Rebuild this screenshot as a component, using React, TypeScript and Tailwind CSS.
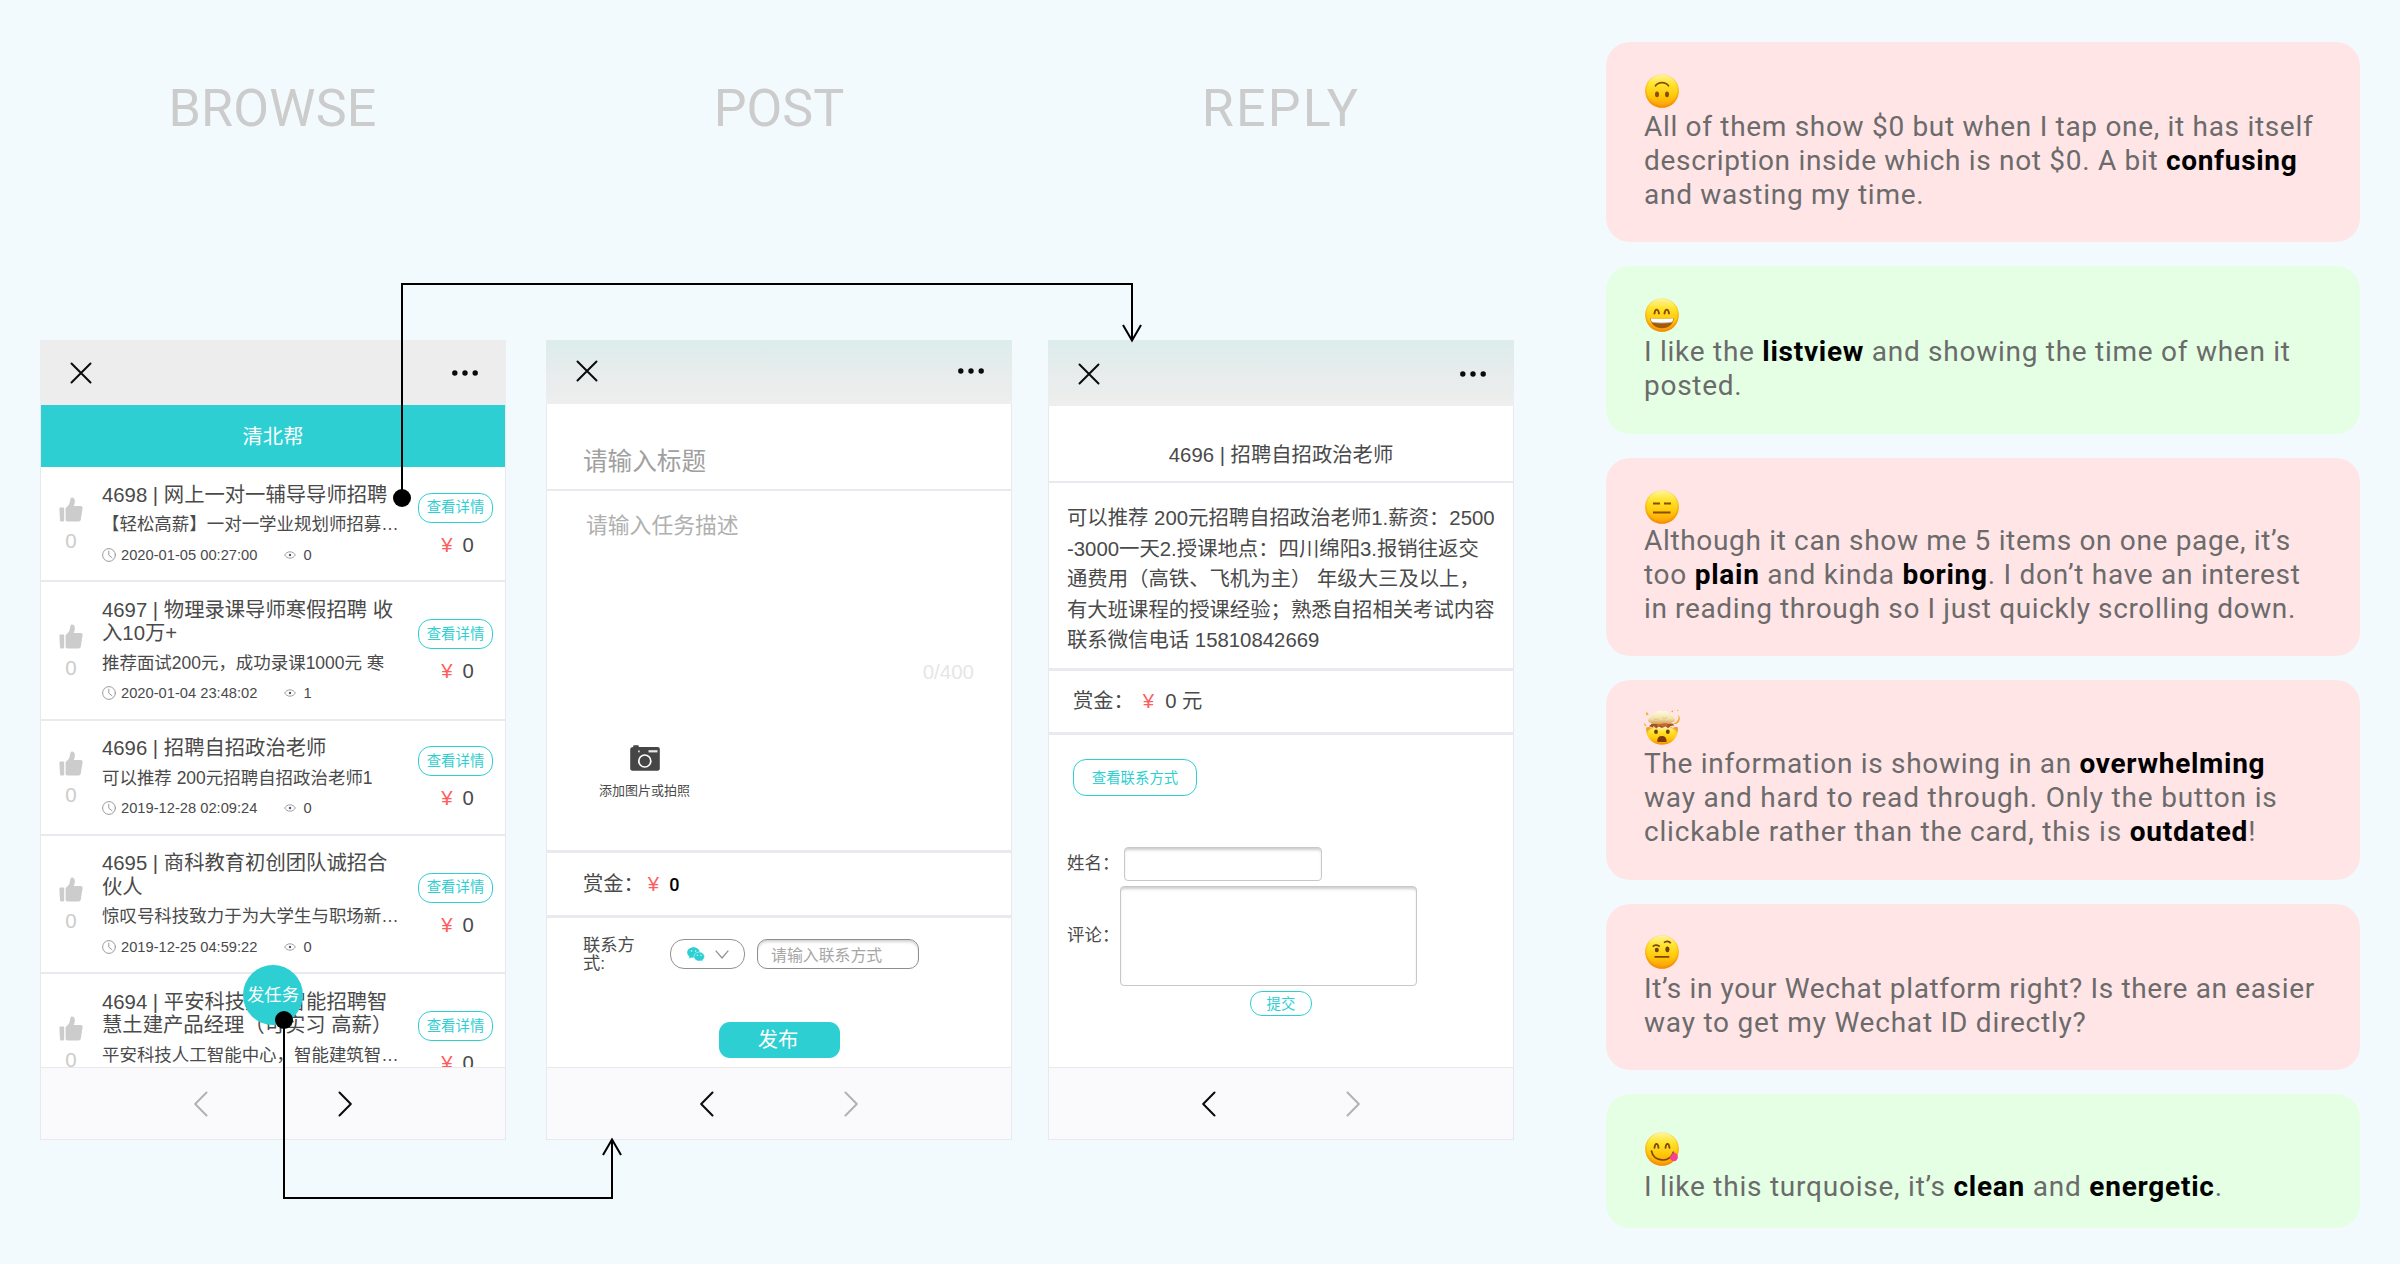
import type { ReactNode } from "react";

const UI_FONT = "font-['Liberation_Sans','Noto_Sans_CJK_SC',sans-serif]";

/* ---------- icons ---------- */

function CloseIcon() {
  return (
    <svg width="22" height="22" viewBox="0 0 22 22" fill="none" stroke="#0b0b0b" strokeWidth="2" strokeLinecap="round">
      <path d="M1.5 1.5 20.5 20.5M20.5 1.5 1.5 20.5" />
    </svg>
  );
}

function MoreIcon() {
  return (
    <svg width="26" height="6" viewBox="0 0 26 6" fill="#0b0b0b">
      <circle cx="2.8" cy="3" r="2.7" />
      <circle cx="13" cy="3" r="2.7" />
      <circle cx="23.2" cy="3" r="2.7" />
    </svg>
  );
}

function ChevronIcon({ dir, active }: { dir: "left" | "right"; active: boolean }) {
  return (
    <svg width="14" height="26" viewBox="0 0 14 26" fill="none" stroke={active ? "#0b0b0b" : "#b2b2b4"} strokeWidth="2" strokeLinecap="round" strokeLinejoin="round">
      <path d={dir === "left" ? "M12.5 1.5 1.2 13l11.3 11.5" : "M1.5 1.5 12.8 13 1.5 24.5"} />
    </svg>
  );
}

function ThumbIcon() {
  return (
    <svg width="24" height="25" viewBox="0 0 24 25" fill="#cccccc">
      <path d="M.4 11.4a.8.8 0 0 1 .8-.8h3.200a.8.8 0 0 1 .8.8v12.200a.8.8 0 0 1-.8.8H1.900a.9.9 0 0 1-.9-.8z" />
      <path d="M6.600 11c1.600-.9 3.400-2.900 4-4.900.4-1.500.5-3.100.9-4.400C11.800.8 12.600.4 13.500.6c1.500.3 2.500 1.900 2.400 3.800-.1 1.700-.6 3.200-1.200 4.700h7c1.300 0 2.100.9 1.900 2.100l-1.800 11.300c-.2 1.200-1 1.900-2.200 1.900H8.400c-1 0-1.800-.7-1.800-1.700z" />
    </svg>
  );
}

function ClockIcon() {
  return (
    <svg width="14" height="14" viewBox="0 0 14 14" fill="none" stroke="#8f8f8f" strokeWidth="0.9" strokeLinecap="round">
      <circle cx="7" cy="7" r="6.4" />
      <path d="M6.800 3.200v4l3.200 2.500" />
    </svg>
  );
}

function EyeIcon() {
  return (
    <svg width="12" height="8" viewBox="0 0 12 8" fill="none" stroke="#858585" strokeWidth="0.8">
      <path d="M.6 4C1.800 2.100 3.700.8 6 .8S10.200 2.100 11.400 4C10.200 5.900 8.300 7.200 6 7.200S1.800 5.900.6 4z" />
      <circle cx="6" cy="4" r="1.200" fill="#555" stroke="none" />
    </svg>
  );
}

function CameraIcon() {
  return (
    <svg width="30" height="26" viewBox="0 0 30 26">
      <path d="M3.200 2V1.200C3.200.5 3.700.2 4.300.2h3.500c.7 0 1 .4 1 1V2H27.500C29 2 29.800 2.900 29.800 4.200v19.300c0 1.300-.9 2.200-2.200 2.200H2.400C1.100 25.700.2 24.800.2 23.500V4.500C.2 3 1.300 2 3.200 2z" fill="#464646" />
      <circle cx="14.800" cy="16" r="6" fill="none" stroke="#fff" strokeWidth="1.700" />
      <rect x="18.500" y="5.200" width="9" height="2.200" fill="#e9e9e9" />
      <rect x="8" y="5.500" width="1.800" height="1.800" fill="#cfcfcf" />
    </svg>
  );
}

function WechatIcon() {
  return (
    <svg width="18" height="15" viewBox="0 0 18 15">
      <path d="M6.500.3C3 .3.2 2.700.2 5.600c0 1.700.9 3.100 2.300 4.100l-.6 2 2.300-1.200c.8.200 1.500.3 2.300.3 3.500 0 6.300-2.300 6.300-5.200S10 .3 6.500.3z" fill="#2dcfd3" />
      <path d="M12.200 5.100c-3 0-5.300 2-5.300 4.500s2.300 4.500 5.300 4.500c.7 0 1.300-.1 1.900-.3l1.900 1-.5-1.700c1.200-.8 2-2.100 2-3.500 0-2.500-2.400-4.500-5.300-4.500z" fill="#2dcfd3" stroke="#fff" strokeWidth=".5" />
      <g fill="#d8fbfb">
        <circle cx="4.500" cy="4" r=".8" />
        <circle cx="8.600" cy="4" r=".8" />
        <circle cx="10.400" cy="8.300" r=".7" />
        <circle cx="14" cy="8.300" r=".7" />
      </g>
    </svg>
  );
}

/* ---------- emoji ---------- */

type Mood = "upside" | "grin" | "blank" | "mind" | "brow" | "yum";

function EmojiDefs() {
  return (
    <svg width="0" height="0" className="absolute">
      <defs>
        <linearGradient id="face" x1="0" y1="0" x2="0" y2="1">
          <stop offset="0" stopColor="#fff5a0" />
          <stop offset="0.3" stopColor="#ffe42e" />
          <stop offset="0.65" stopColor="#ffc80a" />
          <stop offset="1" stopColor="#fb9a08" />
        </linearGradient>
        <radialGradient id="rim" cx="0.5" cy="0.46" r="0.54">
          <stop offset="0.8" stopColor="#f58a00" stopOpacity="0" />
          <stop offset="1" stopColor="#ee7f06" stopOpacity="0.75" />
        </radialGradient>
        <linearGradient id="cloud" x1="0" y1="0" x2="0" y2="1">
          <stop offset="0" stopColor="#fffbe2" />
          <stop offset="0.6" stopColor="#f2dfa6" />
          <stop offset="1" stopColor="#d49a52" />
        </linearGradient>
      </defs>
    </svg>
  );
}

function Emoji({ mood }: { mood: Mood }) {
  if (mood === "mind") {
    return (
      <svg width="36" height="36" viewBox="0 0 36 36" className="block">
        <path d="M2.200 18.500c2-.9 3.500-.8 5.200.6l2-1.500 2.600 2 2.400-1.500 3.600 1.500 3.500-1.600 2.600 1.700 2.800-2 2 1.200c1.400-1 3.200-1.200 5-.4.3 10.100-5.900 17-15.900 17S1.700 28.600 2.200 18.500z" fill="url(#face)" />
        <path d="M2.200 18.500c2-.9 3.500-.8 5.200.6l2-1.500 2.600 2 2.400-1.500 3.600 1.500 3.500-1.600 2.600 1.700 2.800-2 2 1.200c1.400-1 3.200-1.200 5-.4.3 10.100-5.900 17-15.900 17S1.700 28.600 2.200 18.500z" fill="url(#rim)" />
        <path d="M5 17.200l3.500 1.200 1-1.500 2.800 2.600 2.200-1.900 3.500 1.500 3.600-1.800 2.400 1.900 2.900-2.300 3.600-.6-2.300-1.700H8z" fill="#a3541f" />
        <path d="M14 13h9l1 4.500-2.500-1-2.500 1.200-2.600-1.200-3.400 1z" fill="#c46a37" />
        <path d="M6.500 13.800C3.600 13.500 3 9.600 6 8.700 5.800 6 8.500 4.300 10.600 5.200 11.500 2 16 .9 18.200 2.700c2.600-1.700 6.300-.4 6.800 2.300 3-.6 5 1.200 4.500 3.600 2.500 1.200 1.700 4.600-1 4.700-3.500 1.900-7 .5-9.500 1.300-3.500 1-9 .9-12.500-.8z" fill="url(#cloud)" />
        <path d="M10 9.500c1.500 1.300 3.200 1.200 4.500-.2M18 8.500c1.500 1.500 3.800 1.200 5-.4M13 12.200c2 .8 4 .6 5.500-.3" fill="none" stroke="#dfc084" strokeWidth="0.9" />
        <g fill="#f7a61c">
          <path d="M2.500 2.500l2.300 3.200-2.700.5z" />
          <path d="M.4 13.500l2 3.700-2-.6z" />
          <path d="M33.500 11.500c1.500-2 1.600-4 .2-5.500 2.500.8 3 4.600.4 7.700-2.200 1.800-4.500 1.300-5.200.6 2 .1 3.500-.9 4.600-2.800z" />
          <path d="M27 2.200l2.200-.9-.3 2zM33 .8l1.600.4-1 1z" />
        </g>
        <ellipse cx="12" cy="22.800" rx="1.900" ry="2.300" fill="#6b3f06" />
        <ellipse cx="23.800" cy="22.800" rx="1.900" ry="2.300" fill="#6b3f06" />
        <path d="M13.200 32.200c0-3.300 1.800-5.200 4.700-5.200s4.700 1.900 4.700 5.200c0 .9-1.900.8-4.700.8s-4.700.1-4.700-.8z" fill="#7d3c0a" />
      </svg>
    );
  }
  return (
    <svg width="36" height="36" viewBox="0 0 36 36" className="block">
      <circle cx="18" cy="18" r="16.800" fill="url(#face)" />
      <circle cx="18" cy="18" r="16.800" fill="url(#rim)" />
      {mood === "upside" && (
        <g>
          <path d="M11.500 12.800c2.900-4.200 10.100-4.200 13 0" fill="none" stroke="#8a4b05" strokeWidth="1.700" strokeLinecap="round" />
          <ellipse cx="13" cy="21.300" rx="2" ry="2.900" fill="#8a4b05" />
          <ellipse cx="23" cy="21.300" rx="2" ry="2.900" fill="#8a4b05" />
        </g>
      )}
      {mood === "grin" && (
        <g>
          <path d="M10.500 16.500c.6-5.200 3.700-5.200 4.500 0M20.500 16.500c.7-5.200 3.800-5.200 4.500 0" fill="none" stroke="#8a4b05" strokeWidth="1.900" strokeLinecap="round" />
          <path d="M6.500 21c7.500 1.200 15.500 1.200 23 0 .3 6-4.500 10.200-11.500 10.200S6.200 27 6.500 21z" fill="#a55806" />
          <path d="M7 21.200c7.400 1.100 14.600 1.100 22 0 .1 1.600-.2 2.900-.9 3.700-6.300 1.300-13.900 1.300-20.200 0C7.200 24.100 6.900 22.800 7 21.200z" fill="#fff" />
          <path d="M7.600 25c6.700 1.300 14.100 1.300 20.800 0" fill="none" stroke="#b8b8b8" strokeWidth="0.900" />
        </g>
      )}
      {mood === "blank" && (
        <g stroke="#8a4b05" strokeWidth="2">
          <path d="M9 14.500h7M20 14.500h7M9 23.500h17.500" />
        </g>
      )}
      {mood === "brow" && (
        <g>
          <ellipse cx="12.800" cy="16" rx="2" ry="2.300" fill="#6f3d06" />
          <ellipse cx="23.400" cy="15.300" rx="2" ry="2.900" fill="#6f3d06" />
          <path d="M8.800 12.600c1.500-1.600 4-1.800 7-.2M20 8.600c2-1.800 4.700-1.800 6.800.6M10.500 22.800h14.800" fill="none" stroke="#7d4406" strokeWidth="1.700" />
        </g>
      )}
      {mood === "yum" && (
        <g>
          <path d="M10.500 16.800c.6-5.200 3.400-5.200 4 0M21.500 16.800c.6-5.200 3.400-5.200 4 0" fill="none" stroke="#7d4406" strokeWidth="1.800" strokeLinecap="round" />
          <path d="M7.500 20c2 11.500 18.500 12 21.800 1.200" fill="none" stroke="#7d4406" strokeWidth="1.700" strokeLinecap="round" />
          <path d="M25.500 26.500c1.500-1.400 2.700-3 3.600-5 2.800.1 4.800 1.800 4.800 4.400 0 2.900-2.400 4.800-4.900 4.200-1.800-.5-3-1.800-3.500-3.600z" fill="#f7418f" />
        </g>
      )}
    </svg>
  );
}

/* ---------- phone frame ---------- */

function Phone({ tinted, headerClass, children, backActive }: { tinted: boolean; headerClass: string; children: ReactNode; backActive: boolean }) {
  return (
    <section className={`flex h-[800px] w-[466px] flex-col border border-[#e8e9ee] bg-white text-[#4a4a4a] ${UI_FONT}`}>
      <header className={`-mx-px -mt-px flex shrink-0 justify-between pr-[28px] pl-[30px] ${headerClass} ${tinted ? "bg-linear-to-b from-[#dcedec] via-[#e7ecec] to-[#eeeeee]" : "bg-[#ededed]"}`}>
        <CloseIcon />
        <span className="pt-2">
          <MoreIcon />
        </span>
      </header>
      <div className="relative flex min-h-0 flex-1 flex-col overflow-hidden">{children}</div>
      <footer className="flex h-[72px] shrink-0 items-center justify-center gap-[130px] border-t border-[#e9e9ed] bg-[#fafafc]">
        <ChevronIcon dir="left" active={backActive} />
        <ChevronIcon dir="right" active={!backActive} />
      </footer>
    </section>
  );
}

/* ---------- browse ---------- */

type Task = { title: string[]; desc: string; date?: string; views?: string };

const tasks: Task[] = [
  { title: ["4698 | 网上一对一辅导导师招聘"], desc: "【轻松高薪】一对一学业规划师招募…", date: "2020-01-05 00:27:00", views: "0" },
  { title: ["4697 | 物理录课导师寒假招聘 收", "入10万+"], desc: "推荐面试200元，成功录课1000元 寒", date: "2020-01-04 23:48:02", views: "1" },
  { title: ["4696 | 招聘自招政治老师"], desc: "可以推荐 200元招聘自招政治老师1", date: "2019-12-28 02:09:24", views: "0" },
  { title: ["4695 | 商科教育初创团队诚招合", "伙人"], desc: "惊叹号科技致力于为大学生与职场新…", date: "2019-12-25 04:59:22", views: "0" },
  { title: ["4694 | 平安科技建筑智能招聘智", "慧土建产品经理（可实习 高薪）"], desc: "平安科技人工智能中心，智能建筑智…" },
];

function TaskRow({ task }: { task: Task }) {
  return (
    <article className="flex shrink-0 items-center border-b-2 border-[#e9eaef] whitespace-nowrap">
      <div className="flex w-[60px] flex-col items-center pt-[3px]">
        <ThumbIcon />
        <span className="mt-[7px] text-[20.500px] leading-6 text-[#cccccc]">0</span>
      </div>
      <div className="w-[317px] pt-[16.500px] pb-[15.500px] pl-[1px]">
        {task.title.map((line) => (
          <div key={line} className="text-[20.330px] leading-[23.500px]">
            {line}
          </div>
        ))}
        <div className="mt-[5px] text-[17.470px] leading-6">{task.desc}</div>
        <div className="mt-[8.500px] flex h-5 items-center text-[14.700px] leading-5">
          {task.date && (
            <>
              <ClockIcon />
              <span className="ml-[5px]">{task.date}</span>
              <span className="mr-[7px] ml-[27px]">
                <EyeIcon />
              </span>
              <span>{task.views}</span>
            </>
          )}
        </div>
      </div>
      <div className="flex flex-col items-center pt-[2px]">
        <span className="flex h-[30px] w-[75px] items-center justify-center rounded-[13px] border-[1.500px] border-[#2dcfd3] pt-px text-[14.400px] text-[#2dcfd3]">查看详情</span>
        <span className="mt-[10px] flex gap-[10px] pl-1 text-[20.300px] leading-6">
          <span className="text-[#ff5d5d]">¥</span>
          <span>0</span>
        </span>
      </div>
    </article>
  );
}

function BrowsePhone() {
  return (
    <Phone tinted={false} backActive={false} headerClass="h-[65px] pt-[22px]">
      <div className="flex h-[62px] shrink-0 items-center justify-center bg-[#2dcfd3] pt-0.5 text-[20.300px] text-white">清北帮</div>
      {tasks.map((task) => (
        <TaskRow key={task.title[0]} task={task} />
      ))}
      <div className="absolute top-[560px] left-[202px] flex size-[60px] items-center justify-center rounded-full bg-[#2dcfd3] text-[17.400px] whitespace-nowrap text-white">发任务</div>
    </Phone>
  );
}

/* ---------- post ---------- */

function PostPhone() {
  return (
    <Phone tinted backActive headerClass="h-[64px] pt-5">
      <div className="flex h-[87px] shrink-0 items-center border-b-2 border-[#e9eaef] pt-[31px] pl-[36px] text-[24.600px] text-[#a0a0a0]">请输入标题</div>
      <div className="flex h-[362px] shrink-0 flex-col border-b-[3px] border-[#e9eaef] pt-[19px]">
        <div className="pl-[39px] text-[21.800px] leading-8 text-[#b0b0b0]">请输入任务描述</div>
        <div className="mt-[114px] pr-[37px] text-right text-[20.500px] leading-8 text-[#e6e6e6]">0/400</div>
        <div className="mt-[57px] ml-[52px] flex w-[91px] flex-col items-center">
          <CameraIcon />
          <span className="mt-[10px] text-[13px] leading-5 whitespace-nowrap">添加图片或拍照</span>
        </div>
      </div>
      <div className="flex h-[65px] shrink-0 items-center border-b-[3px] border-[#e9eaef] pt-px pl-[36px] text-[20.300px]">
        <span>赏金：</span>
        <span className="ml-1 text-[#ff5d5d]">¥</span>
        <span className="ml-[10px] font-['Roboto'] text-[18px] font-medium text-black">0</span>
      </div>
      <div className="flex shrink-0 items-start pt-[18px] pl-[36px]">
        <div className="mt-px w-[87px] text-[17.300px] leading-[17.500px]">
          <div>联系方</div>
          <div>式:</div>
        </div>
        <div className="mt-[3px] flex h-[30px] w-[75px] items-center gap-[10px] rounded-[14px] border-[1.500px] border-[#929292] pl-4">
          <WechatIcon />
          <svg width="14" height="9" viewBox="0 0 14 9" fill="none" stroke="#929292" strokeWidth="1.300">
            <path d="M.7.7 7 8 13.300.7" />
          </svg>
        </div>
        <div className="mt-[3px] ml-3 flex h-[30px] w-[162px] items-center rounded-[10px] border-[1.500px] border-[#8e8e8e] pt-[3px] pl-[13px] text-[15.900px] whitespace-nowrap text-[#a6a6a6] shadow-[inset_0_3px_3px_-1px_#d2d2d2]">请输入联系方式</div>
      </div>
      <div className="mt-[50px] flex h-9 w-[121px] shrink-0 items-center justify-center self-center rounded-[11px] bg-[#2dcfd3] pt-px pr-0.5 text-[20.300px] text-white">发布</div>
    </Phone>
  );
}

/* ---------- reply ---------- */

const paragraph = [
  "可以推荐 200元招聘自招政治老师1.薪资：2500",
  "-3000一天2.授课地点：四川绵阳3.报销往返交",
  "通费用（高铁、飞机为主） 年级大三及以上，",
  "有大班课程的授课经验；熟悉自招相关考试内容",
  "联系微信电话 15810842669",
];

function ReplyPhone() {
  return (
    <Phone tinted backActive headerClass="h-[66px] pt-[23px]">
      <div className="flex h-[77px] shrink-0 items-center justify-center border-b-2 border-[#e9eaef] pt-[23px] text-[20.330px]">4696 | 招聘自招政治老师</div>
      <div className="h-[188px] shrink-0 border-b-[3px] border-[#e9eaef] pt-[20px] pl-[18px]">
        {paragraph.map((line) => (
          <div key={line} className="text-[20.360px] leading-[30.600px] whitespace-nowrap">
            {line}
          </div>
        ))}
      </div>
      <div className="flex h-16 shrink-0 items-center border-b-[3px] border-[#e9eaef] pl-[24px] text-[20.300px]">
        <span>赏金：</span>
        <span className="ml-[9px] text-[#ff5d5d]">¥</span>
        <span className="ml-[11px]">0 元</span>
      </div>
      <div className="mt-[24px] ml-6 flex h-[37px] w-[124px] shrink-0 items-center justify-center rounded-[13px] border-[1.500px] border-[#2dcfd3] pt-[3px] text-[14.400px] text-[#2dcfd3]">查看联系方式</div>
      <div className="mt-[51px] flex shrink-0 items-center pl-[18px]">
        <span className="w-[57px] pb-0.5 text-[17.450px] whitespace-nowrap">姓名：</span>
        <div className="h-[34px] w-[198px] rounded-[4px] border-[1.500px] border-[#c8c8c8] shadow-[inset_0_3px_3px_-1px_#cccccc]" />
      </div>
      <div className="mt-[5px] flex shrink-0 items-center pl-[18px]">
        <span className="w-[53px] pb-0.5 text-[17.450px] whitespace-nowrap">评论：</span>
        <div className="h-[100px] w-[297px] rounded-[4px] border-[1.500px] border-[#c8c8c8] shadow-[inset_0_3px_3px_-1px_#cccccc]" />
      </div>
      <div className="mt-[5px] flex h-[25px] w-[62px] shrink-0 items-center justify-center self-center rounded-[12px] border-[1.500px] border-[#2dcfd3] pt-[3px] text-[14.400px] text-[#2dcfd3]">提交</div>
    </Phone>
  );
}

/* ---------- feedback cards ---------- */

function B({ children }: { children: ReactNode }) {
  return <strong className="font-bold text-black">{children}</strong>;
}

type Feedback = { mood: Mood; box: string; gap: string; lines: { text: ReactNode; track: string }[] };

const feedback: Feedback[] = [
  {
    mood: "upside",
    box: "h-[200px] bg-[#ffe5e6] pt-[31px]",
    gap: "mt-px",
    lines: [
      { text: "All of them show $0 but when I tap one, it has itself", track: "tracking-[0.690px]" },
      { text: <>description inside which is not $0. A bit <B>confusing</B></>, track: "tracking-[0.690px]" },
      { text: "and wasting my time.", track: "tracking-[0.730px]" },
    ],
  },
  {
    mood: "grin",
    box: "h-[168px] bg-[#e5ffe4] pt-[31px]",
    gap: "mt-0.5",
    lines: [
      { text: <>I like the <B>listview</B> and showing the time of when it</>, track: "tracking-[0.730px]" },
      { text: "posted.", track: "tracking-[0.730px]" },
    ],
  },
  {
    mood: "blank",
    box: "h-[198px] bg-[#ffe5e6] pt-[31px]",
    gap: "-mt-px",
    lines: [
      { text: "Although it can show me 5 items on one page, it’s", track: "tracking-[0.670px]" },
      { text: <>too <B>plain</B> and kinda <B>boring</B>. I don’t have an interest</>, track: "tracking-[0.730px]" },
      { text: "in reading through so I just quickly scrolling down.", track: "tracking-[0.620px]" },
    ],
  },
  {
    mood: "mind",
    box: "h-[200px] bg-[#ffe5e6] pt-[29px]",
    gap: "mt-0.5",
    lines: [
      { text: <>The information is showing in an <B>overwhelming</B></>, track: "tracking-[0.700px]" },
      { text: "way and hard to read through. Only the button is", track: "tracking-[0.830px]" },
      { text: <>clickable rather than the card, this is <B>outdated</B>!</>, track: "tracking-[0.800px]" },
    ],
  },
  {
    mood: "brow",
    box: "h-[166px] bg-[#ffe5e6] pt-[30px]",
    gap: "mt-0.5",
    lines: [
      { text: "It’s in your Wechat platform right? Is there an easier", track: "tracking-[0.640px]" },
      { text: "way to get my Wechat ID directly?", track: "tracking-[0.780px]" },
    ],
  },
  {
    mood: "yum",
    box: "h-[134px] bg-[#e5ffe4] pt-[37px]",
    gap: "mt-[3px]",
    lines: [{ text: <>I like this turquoise, it’s <B>clean</B> and <B>energetic</B>.</>, track: "tracking-[0.770px]" }],
  },
];

function FeedbackCard({ item }: { item: Feedback }) {
  return (
    <article className={`w-[754px] shrink-0 rounded-[24px] pl-[38px] ${item.box}`}>
      <Emoji mood={item.mood} />
      <p className={`text-[28px] leading-[34px] whitespace-nowrap text-[#6b6b6b] ${item.gap}`}>
        {item.lines.map((line, i) => (
          <span key={i} className={`block ${line.track}`}>
            {line.text}
          </span>
        ))}
      </p>
    </article>
  );
}

/* ---------- page ---------- */

function Connectors() {
  return (
    <svg className="pointer-events-none absolute inset-0" width="1600" height="1264" viewBox="0 0 1600 1264" fill="none" stroke="#000" strokeWidth="2">
      <path d="M402 498V284H1132V340" />
      <path d="M1123 325 1132 340.500 1141 325" />
      <path d="M284 1020V1198H612V1140" />
      <path d="M603 1155 612 1139.500 621 1155" />
      <circle cx="402" cy="498" r="9" fill="#000" stroke="none" />
      <circle cx="284" cy="1020" r="9" fill="#000" stroke="none" />
    </svg>
  );
}

function Column({ title, titleClass, children }: { title: string; titleClass: string; children: ReactNode }) {
  return (
    <div className="flex w-[466px] flex-col">
      <h2 className={`flex h-[340px] justify-center pt-[79px] text-[52px] leading-[60px] text-[#cccccc] ${titleClass}`}>{title}</h2>
      {children}
    </div>
  );
}

export default function App() {
  return (
    <main className="relative flex h-[1264px] w-[2400px] overflow-hidden bg-[#f2fafe] pl-10 font-['Roboto',sans-serif]">
      <EmojiDefs />
      <Column title="BROWSE" titleClass="tracking-[0.200px] pr-px">
        <BrowsePhone />
      </Column>
      <div className="ml-10">
        <Column title="POST" titleClass="tracking-normal">
          <PostPhone />
        </Column>
      </div>
      <div className="ml-9">
        <Column title="REPLY" titleClass="tracking-[2.200px]">
          <ReplyPhone />
        </Column>
      </div>
      <aside className="ml-[92px] flex flex-col gap-6 pt-[42px]">
        {feedback.map((item) => (
          <FeedbackCard key={item.mood} item={item} />
        ))}
      </aside>
      <Connectors />
    </main>
  );
}
